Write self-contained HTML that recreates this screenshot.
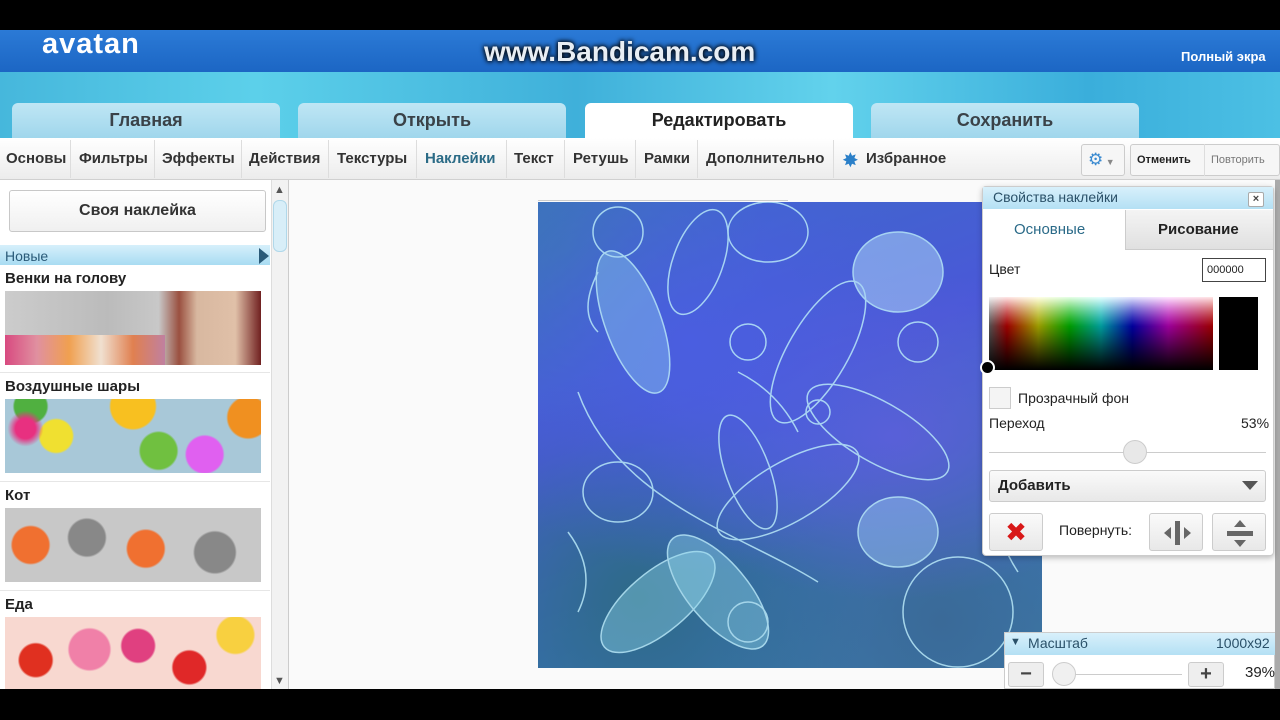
<!DOCTYPE html>
<html><head><meta charset="utf-8"><style>
*{margin:0;padding:0;box-sizing:border-box}
body{width:1280px;height:720px;overflow:hidden;background:#000;font-family:"Liberation Sans","DejaVu Sans",sans-serif;position:relative}
.a{position:absolute}
.hdr{left:0;top:30px;width:1280px;height:42px;background:linear-gradient(#2b7ad6,#1c66c4)}
.water{left:0;top:72px;width:1280px;height:66px;background:linear-gradient(90deg,#46b7dc,#5cd0ea 20%,#3fb0da 45%,#62d2ec 65%,#3aaedb 85%,#4cc0e4)}
.tab{top:103px;height:36px;background:linear-gradient(#bfe6f4,#9fd6ec);border-radius:6px 6px 0 0;font-size:18px;font-weight:bold;color:#3a4248;text-align:center;line-height:34px}
.menu{left:0;top:138px;width:1280px;height:42px;background:linear-gradient(#fff,#ececec);border-bottom:1px solid #d0d0d0}
.mi{top:150px;font-size:15px;font-weight:bold;color:#333}
.sep{top:140px;width:1px;height:38px;background:#ddd}
.lbl{font-size:15px;font-weight:bold;color:#222}
.thumb{left:5px;width:256px;height:74px}
</style></head><body>
<div class="a hdr"></div>
<div class="a" style="left:42px;top:28px;font-size:29px;font-weight:bold;color:#fff;letter-spacing:1px">avatan</div>
<div class="a" style="left:484px;top:36px;font-size:28px;font-weight:bold;color:#e8eef4;text-shadow:0 0 4px #000,0 0 6px #000">www.Bandicam.com</div>
<div class="a" style="left:1181px;top:49px;font-size:13px;font-weight:bold;color:#fff">Полный экра</div>
<div class="a water"></div>
<div class="a tab" style="left:12px;width:268px">Главная</div>
<div class="a tab" style="left:298px;width:268px">Открыть</div>
<div class="a tab" style="left:585px;width:268px;background:#fff;color:#222">Редактировать</div>
<div class="a tab" style="left:871px;width:268px">Сохранить</div>
<div class="a menu"></div>
<div class="a mi" style="left:6px">Основы</div><div class="a sep" style="left:70px"></div>
<div class="a mi" style="left:79px">Фильтры</div><div class="a sep" style="left:154px"></div>
<div class="a mi" style="left:162px">Эффекты</div><div class="a sep" style="left:241px"></div>
<div class="a mi" style="left:249px">Действия</div><div class="a sep" style="left:328px"></div>
<div class="a mi" style="left:337px">Текстуры</div><div class="a sep" style="left:416px"></div>
<div class="a mi" style="left:425px;color:#2b6b86">Наклейки</div><div class="a sep" style="left:506px"></div>
<div class="a mi" style="left:514px">Текст</div><div class="a sep" style="left:564px"></div>
<div class="a mi" style="left:573px">Ретушь</div><div class="a sep" style="left:635px"></div>
<div class="a mi" style="left:644px">Рамки</div><div class="a sep" style="left:697px"></div>
<div class="a mi" style="left:706px">Дополнительно</div><div class="a sep" style="left:833px"></div>
<div class="a" style="left:842px;top:148px;font-size:20px;color:#2a7fc8">✸</div>
<div class="a mi" style="left:866px">Избранное</div>
<div class="a" style="left:1081px;top:144px;width:44px;height:32px;border:1px solid #ccc;border-radius:3px;background:#f6f6f6;color:#3a8ad0;font-size:17px;line-height:30px;padding-left:6px">⚙<span style="font-size:9px;color:#888"> ▼</span></div>
<div class="a" style="left:1130px;top:144px;width:150px;height:32px;border:1px solid #ccc;border-radius:3px;background:#f6f6f6"></div>
<div class="a" style="left:1137px;top:154px;font-size:11px;font-weight:bold;color:#222">Отменить</div>
<div class="a" style="left:1204px;top:144px;width:1px;height:32px;background:#ddd"></div>
<div class="a" style="left:1211px;top:154px;font-size:11px;color:#777">Повторить</div>
<div class="a" style="left:0;top:180px;width:1275px;height:509px;background:#fafafa"></div>
<div class="a" style="left:1275px;top:180px;width:5px;height:509px;background:#aaa"></div>
<div class="a" style="left:0;top:180px;width:271px;height:509px;background:#fff"></div>
<div class="a" style="left:271px;top:180px;width:18px;height:509px;background:#f2f2f2;border-left:1px solid #ddd;border-right:1px solid #ccc"></div>
<div class="a" style="left:274px;top:184px;font-size:11px;color:#555">▲</div>
<div class="a" style="left:273px;top:200px;width:14px;height:52px;background:#d8eef8;border:1px solid #b0d8ea;border-radius:6px"></div>
<div class="a" style="left:274px;top:675px;font-size:11px;color:#555">▼</div>
<div class="a" style="left:9px;top:190px;width:257px;height:42px;border:1px solid #c8c8c8;border-radius:3px;background:linear-gradient(#fff,#f0f0f0);text-align:center;line-height:40px;font-size:16px;font-weight:bold;color:#333">Своя наклейка</div>
<div class="a" style="left:0;top:245px;width:270px;height:20px;background:linear-gradient(#d6f0fb,#a8dcf2)"></div>
<div class="a" style="left:5px;top:248px;font-size:14px;color:#2a5a78">Новые</div>
<div class="a" style="left:259px;top:248px;width:0;height:0;border-left:10px solid #2a5a78;border-top:8px solid transparent;border-bottom:8px solid transparent"></div>
<div class="a lbl" style="left:5px;top:270px">Венки на голову</div>
<div class="a thumb" style="top:291px;background:linear-gradient(90deg,#ccc,#bbb 40%,#c8c8c8 60%,#9a5040 68%,#d8b8a0 75%,#e0c0a8 90%,#702020)"></div>
<div class="a" style="left:5px;top:335px;width:160px;height:30px;background:linear-gradient(90deg,#d84a80,#e090a0,#f0a050,#f0e0d0,#e08050,#c080a0)"></div>
<div class="a" style="left:0;top:372px;width:270px;height:1px;background:#e6e6e6"></div>
<div class="a lbl" style="left:5px;top:378px">Воздушные шары</div>
<div class="a thumb" style="top:399px;background:radial-gradient(circle at 8% 40%,#e83080 10px,transparent 18px),radial-gradient(circle at 20% 50%,#f0e030 16px,transparent 18px),radial-gradient(circle at 50% 10%,#f8c020 22px,transparent 24px),radial-gradient(circle at 60% 70%,#70c040 18px,transparent 20px),radial-gradient(circle at 78% 75%,#e060f0 18px,transparent 20px),radial-gradient(circle at 95% 25%,#f09020 20px,transparent 22px),radial-gradient(circle at 10% 10%,#50b040 16px,transparent 18px),#a8c8d8"></div>
<div class="a" style="left:0;top:481px;width:270px;height:1px;background:#e6e6e6"></div>
<div class="a lbl" style="left:5px;top:487px">Кот</div>
<div class="a thumb" style="top:508px;background:radial-gradient(circle at 10% 50%,#f07030 18px,transparent 20px),radial-gradient(circle at 32% 40%,#888 18px,transparent 20px),radial-gradient(circle at 55% 55%,#f07030 18px,transparent 20px),radial-gradient(circle at 82% 60%,#888 20px,transparent 22px),#c8c8c8"></div>
<div class="a" style="left:0;top:590px;width:270px;height:1px;background:#e6e6e6"></div>
<div class="a lbl" style="left:5px;top:596px">Еда</div>
<div class="a thumb" style="top:617px;height:72px;background:radial-gradient(circle at 12% 60%,#e03020 16px,transparent 18px),radial-gradient(circle at 33% 45%,#f080a8 20px,transparent 22px),radial-gradient(circle at 52% 40%,#e04080 16px,transparent 18px),radial-gradient(circle at 72% 70%,#e02828 16px,transparent 18px),radial-gradient(circle at 90% 25%,#f8d040 18px,transparent 20px),#f8d8d0"></div>
<div class="a" style="left:538px;top:202px;width:504px;height:466px;overflow:hidden;background:radial-gradient(ellipse at 30% 30%,#4a5ee0,transparent 50%),radial-gradient(ellipse at 70% 50%,#5a60d8,transparent 50%),radial-gradient(ellipse at 20% 85%,#2e6a88,transparent 40%),radial-gradient(ellipse at 80% 90%,#3a6a98,transparent 40%),radial-gradient(ellipse at 5% 10%,#3a7ab0,transparent 30%),linear-gradient(160deg,#3c6cc8,#4a58d8 40%,#3a70b8 70%,#3f7fa8)">
<svg width="504" height="466" fill="none" stroke="#b8e8f8" stroke-width="1.5" opacity=".85">
<ellipse cx="95" cy="120" rx="28" ry="75" transform="rotate(-20 95 120)" fill="#8cc8f0" fill-opacity=".5"/>
<ellipse cx="160" cy="60" rx="25" ry="55" transform="rotate(20 160 60)"/>
<ellipse cx="360" cy="70" rx="45" ry="40" fill="#b0d8f8" fill-opacity=".6"/>
<ellipse cx="230" cy="30" rx="40" ry="30"/>
<ellipse cx="280" cy="150" rx="30" ry="80" transform="rotate(30 280 150)"/>
<ellipse cx="340" cy="230" rx="30" ry="80" transform="rotate(-60 340 230)"/>
<ellipse cx="250" cy="290" rx="30" ry="80" transform="rotate(60 250 290)"/>
<ellipse cx="210" cy="270" rx="22" ry="60" transform="rotate(-20 210 270)"/>
<circle cx="280" cy="210" r="12"/>
<ellipse cx="360" cy="330" rx="40" ry="35" fill="#a0d0f8" fill-opacity=".5"/>
<ellipse cx="120" cy="400" rx="30" ry="70" transform="rotate(50 120 400)" fill="#a0e8f8" fill-opacity=".4"/>
<ellipse cx="180" cy="390" rx="30" ry="70" transform="rotate(-40 180 390)" fill="#a0e8f8" fill-opacity=".4"/>
<ellipse cx="80" cy="290" rx="35" ry="30"/>
<circle cx="420" cy="410" r="55"/>
<circle cx="380" cy="140" r="20"/>
<circle cx="210" cy="420" r="20"/>
<path d="M40 190 C80 300 200 330 280 380 M60 70 q-20 40 0 60 M200 170 q40 20 60 60 M30 330 q30 40 10 80 M480 250 q-40 60 0 120"/>
<circle cx="210" cy="140" r="18"/><circle cx="80" cy="30" r="25"/>
</svg></div>
<div class="a" style="left:538px;top:200px;width:250px;height:1px;background:#ccc"></div>
<div class="a" style="left:982px;top:186px;width:292px;height:370px;background:#fff;border:1px solid #ccc;border-radius:4px;box-shadow:0 2px 6px rgba(0,0,0,.25)"></div>
<div class="a" style="left:983px;top:187px;width:290px;height:22px;background:linear-gradient(#d8f0fb,#b4e0f4)"></div>
<div class="a" style="left:993px;top:189px;font-size:14px;color:#2a5068">Свойства наклейки</div>
<div class="a" style="left:1248px;top:192px;width:16px;height:15px;border:1px solid #aaa;border-radius:2px;background:#fff;font-size:11px;text-align:center;line-height:13px;font-weight:bold;color:#444">×</div>
<div class="a" style="left:1125px;top:210px;width:148px;height:40px;background:linear-gradient(#f4f4f4,#e0e0e0);border-left:1px solid #ccc;border-bottom:1px solid #ccc"></div>
<div class="a" style="left:1014px;top:221px;font-size:15px;color:#2a6a88">Основные</div>
<div class="a" style="left:1158px;top:221px;font-size:15px;font-weight:bold;color:#222">Рисование</div>
<div class="a" style="left:989px;top:261px;font-size:14px;color:#222">Цвет</div>
<div class="a" style="left:1202px;top:258px;width:64px;height:24px;border:1px solid #444;font-size:11px;line-height:22px;padding-left:4px;color:#222">000000</div>
<div class="a" style="left:989px;top:297px;width:224px;height:73px;background:linear-gradient(rgba(0,0,0,0),#000),linear-gradient(rgba(255,255,255,.9),rgba(255,255,255,0) 40%),linear-gradient(90deg,#888,#f00 8%,#ff0 22%,#0f0 36%,#0ff 50%,#00f 64%,#f0f 80%,#f00 100%)"></div>
<div class="a" style="left:1219px;top:297px;width:39px;height:73px;background:#000"></div>
<div class="a" style="left:980px;top:360px;width:15px;height:15px;border-radius:50%;background:#000;border:2px solid #fff"></div>
<div class="a" style="left:989px;top:387px;width:22px;height:22px;border:1px solid #ccc;background:#f4f4f4"></div>
<div class="a" style="left:1018px;top:390px;font-size:14px;color:#222">Прозрачный фон</div>
<div class="a" style="left:989px;top:415px;font-size:14px;color:#222">Переход</div>
<div class="a" style="left:1241px;top:415px;font-size:14px;color:#222">53%</div>
<div class="a" style="left:989px;top:452px;width:277px;height:1px;background:#ccc"></div>
<div class="a" style="left:1123px;top:440px;width:24px;height:24px;border-radius:50%;background:#e8e8e8;border:1px solid #ccc"></div>
<div class="a" style="left:989px;top:470px;width:277px;height:32px;border:1px solid #ccc;border-radius:3px;background:linear-gradient(#fafafa,#e8e8e8);font-size:15px;font-weight:bold;line-height:30px;padding-left:8px;color:#222">Добавить</div>
<div class="a" style="left:1242px;top:481px;width:0;height:0;border-top:9px solid #555;border-left:8px solid transparent;border-right:8px solid transparent"></div>
<div class="a" style="left:989px;top:513px;width:54px;height:38px;border:1px solid #ccc;border-radius:3px;background:linear-gradient(#fafafa,#e8e8e8);color:#d81818;font-size:26px;font-weight:bold;text-align:center;line-height:36px">✖</div>
<div class="a" style="left:1059px;top:522px;font-size:14px;color:#222">Повернуть:</div>
<div class="a" style="left:1149px;top:513px;width:54px;height:38px;border:1px solid #ccc;border-radius:3px;background:linear-gradient(#fafafa,#e8e8e8)">
<svg width="54" height="38"><rect x="25" y="7" width="5" height="24" fill="#666"/><path d="M21 13 L14 19 L21 25Z M34 13 L41 19 L34 25Z" fill="#666"/></svg></div>
<div class="a" style="left:1212px;top:513px;width:54px;height:38px;border:1px solid #ccc;border-radius:3px;background:linear-gradient(#fafafa,#e8e8e8)">
<svg width="54" height="38"><rect x="14" y="17" width="26" height="5" fill="#666"/><path d="M21 13 L27 6 L33 13Z M21 26 L27 33 L33 26Z" fill="#666"/></svg></div>
<div class="a" style="left:1004px;top:632px;width:271px;height:57px;background:#fff;border:1px solid #ccc"></div>
<div class="a" style="left:1005px;top:633px;width:270px;height:22px;background:linear-gradient(#d8f0fb,#b4e0f4)"></div>
<div class="a" style="left:1010px;top:636px;font-size:11px;color:#2a5068">▼</div>
<div class="a" style="left:1028px;top:635px;font-size:14px;color:#2a5068">Масштаб</div>
<div class="a" style="left:1216px;top:635px;font-size:14px;color:#2a5068">1000x92</div>
<div class="a" style="left:1008px;top:662px;width:36px;height:25px;border:1px solid #ccc;border-radius:3px;background:#eee;text-align:center;font-size:20px;font-weight:bold;line-height:23px;color:#444">−</div>
<div class="a" style="left:1054px;top:674px;width:128px;height:1px;background:#ccc"></div>
<div class="a" style="left:1052px;top:662px;width:24px;height:24px;border-radius:50%;background:#f0f0f0;border:1px solid #ccc"></div>
<div class="a" style="left:1188px;top:662px;width:36px;height:25px;border:1px solid #ccc;border-radius:3px;background:#eee;text-align:center;font-size:20px;font-weight:bold;line-height:23px;color:#444">+</div>
<div class="a" style="left:1245px;top:664px;font-size:15px;color:#222">39%</div>
<div class="a" style="left:0;top:689px;width:1280px;height:31px;background:#000"></div>
</body></html>
